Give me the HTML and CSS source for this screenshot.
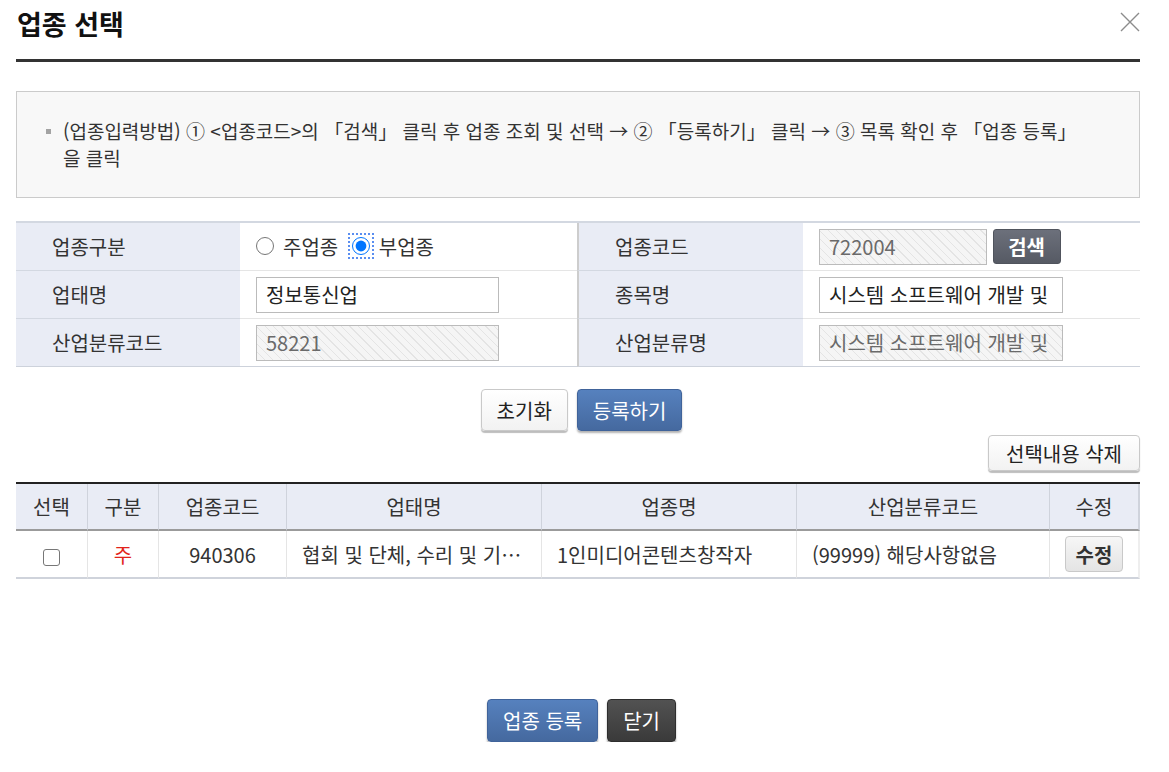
FILE: index.html
```html
<!DOCTYPE html>
<html lang="ko">
<head>
    <meta charset="UTF-8">
    <title>업종 선택</title>
    <link rel="stylesheet" href="styles.css">
</head>
<body>
    <div class="popup">
        <div class="popup-header">
            <h1 class="popup-title">업종 선택</h1>
            <button type="button" class="btn-close" title="닫기">
                <svg width="20" height="20" viewBox="0 0 20 20"><path d="M1 1L19 19M19 1L1 19" stroke="#8c8c8c" stroke-width="1.4" fill="none"/></svg>
            </button>
        </div>

        <!-- 입력 방법 안내 -->
        <div class="guide-box">
            <p class="guide-item">(업종입력방법) ① &lt;업종코드&gt;의 「검색」 클릭 후 업종 조회 및 선택 → ② 「등록하기」 클릭 → ③ 목록 확인 후 「업종 등록」을 클릭</p>
        </div>

        <table class="form-table">
            <colgroup>
                <col class="col-label">
                <col class="col-value">
                <col class="col-label2">
                <col class="col-value">
            </colgroup>
            <tbody>
                <tr>
                    <th>업종구분</th>
                    <td>
                        <label class="radio-item"><input type="radio" name="biz_type" value="main"> 주업종</label>
                        <label class="radio-item"><input type="radio" name="biz_type" value="sub" class="is-focus" checked> 부업종</label>
                    </td>
                    <th class="th-split">업종코드</th>
                    <td>
                        <input type="text" class="input-text input-readonly input-code" value="722004" readonly>
                        <button type="button" class="btn-search">검색</button>
                    </td>
                </tr>
                <tr>
                    <th>업태명</th>
                    <td><input type="text" class="input-text" value="정보통신업"></td>
                    <th class="th-split">종목명</th>
                    <td><input type="text" class="input-text input-wide" value="시스템 소프트웨어 개발 및 기타"></td>
                </tr>
                <tr class="last-row">
                    <th>산업분류코드</th>
                    <td><input type="text" class="input-text input-readonly" value="58221" readonly></td>
                    <th class="th-split">산업분류명</th>
                    <td><input type="text" class="input-text input-wide input-readonly" value="시스템 소프트웨어 개발 및 기타" readonly></td>
                </tr>
            </tbody>
        </table>

        <div class="btn-row">
            <button type="button" class="btn btn-white">초기화</button>
            <button type="button" class="btn btn-blue">등록하기</button>
        </div>
        <div class="btn-row-right">
            <button type="button" class="btn btn-white btn-small">선택내용 삭제</button>
        </div>

        <!-- 등록 목록 -->
        <table class="list-table">
            <colgroup>
                <col class="col-chk">
                <col class="col-type">
                <col class="col-code">
                <col class="col-name">
                <col class="col-name">
                <col class="col-ind">
                <col class="col-edit">
            </colgroup>
            <thead>
                <tr>
                    <th>선택</th>
                    <th>구분</th>
                    <th>업종코드</th>
                    <th>업태명</th>
                    <th>업종명</th>
                    <th>산업분류코드</th>
                    <th class="th-last">수정</th>
                </tr>
            </thead>
            <tbody>
                <tr>
                    <td><input type="checkbox" class="chk"></td>
                    <td class="text-red">주</td>
                    <td>940306</td>
                    <td class="text-left">협회 및 단체, 수리 및 기…</td>
                    <td class="text-left">1인미디어콘텐츠창작자</td>
                    <td class="text-left">(99999) 해당사항없음</td>
                    <td class="td-last"><button type="button" class="btn-edit">수정</button></td>
                </tr>
            </tbody>
        </table>

        <div class="popup-footer">
            <button type="button" class="btn btn-blue btn-large">업종 등록</button>
            <button type="button" class="btn btn-dark btn-large">닫기</button>
        </div>
    </div>
</body>
</html>
```

FILE: styles.css
```css
body {
    margin: 0;
    font-family: "Noto Sans CJK KR", "Noto Sans", sans-serif;
    font-size: 20px;
    color: #333;
    background-color: #fff;
}
.popup {
    width: 1124px;
    margin-left: 16px;
}
.popup-header {
    display: flex;
    justify-content: space-between;
    align-items: flex-start;
    height: 59px;
    border-bottom: 3px solid #333;
}
.popup-title {
    margin: 0;
    padding: 6px 0 0 1px;
    font-size: 27px;
    line-height: 36px;
    font-weight: bold;
    color: #111;
}
.btn-close {
    margin-top: 12px;
    padding: 0;
    width: 20px;
    height: 20px;
    border: none;
    background: none;
    cursor: pointer;
}
.btn-close svg {
    display: block;
}

/* 안내 박스 */
.guide-box {
    margin-top: 29px;
    padding: 25px 56px 26px 29px;
    background-color: #f8f8f8;
    border: 1px solid #cbcbcb;
}
.guide-item {
    display: flex;
    margin: 0;
    font-size: 19px;
    line-height: 27px;
    color: #333;
}
.guide-item::before {
    content: "";
    flex: none;
    width: 5px;
    height: 5px;
    margin: 12px 12px 0 0;
    background-color: #a3a3a3;
}

/* 입력 테이블 */
.form-table {
    width: 100%;
    margin-top: 23px;
    border-collapse: separate;
    border-spacing: 0;
    table-layout: fixed;
    border-top: 2px solid #d3d8e1;
}
.col-label { width: 224px; }
.col-value { width: 337px; }
.col-label2 { width: 226px; }
.form-table th {
    height: 47px;
    padding: 0 0 0 36px;
    text-align: left;
    font-weight: normal;
    color: #333;
    background-color: #e9ecf5;
    border-bottom: 1px solid #d3d8e1;
}
.form-table .th-split {
    padding-left: 36px;
    border-left: 2px solid #cdcdcd;
}
.form-table td {
    height: 47px;
    padding: 0 0 0 16px;
    border-bottom: 1px solid #e5e5e5;
    white-space: nowrap;
}
.form-table .last-row th,
.form-table .last-row td {
    border-bottom-color: #cdd2db;
}
.radio-item {
    display: inline-flex;
    align-items: center;
    margin-right: 8px;
    color: #333;
}
.radio-item input {
    width: 18px;
    height: 18px;
    margin: 0 9px 0 0;
}
.radio-item .is-focus {
    outline: 2px dotted #5a8ef0;
    outline-offset: 2px;
}
.input-text {
    box-sizing: border-box;
    width: 243px;
    height: 36px;
    padding: 0 9px;
    border: 1px solid #bbb;
    font-family: inherit;
    font-size: 20px;
    color: #222;
    background-color: #fff;
    vertical-align: middle;
    outline: none;
}
.input-wide {
    width: 244px;
}
.input-code {
    width: 168px;
}
.input-readonly {
    color: #6a6a6a;
    background: repeating-linear-gradient(45deg, #f5f5f5 0, #f5f5f5 5px, #e4e4e4 5px, #e4e4e4 6px);
}
.btn-search {
    height: 35px;
    width: 68px;
    padding: 0;
    border: 1px solid #50545d;
    border-radius: 3px;
    background: linear-gradient(#6c707b, #565a64);
    color: #fff;
    font-family: inherit;
    font-size: 20px;
    font-weight: bold;
    vertical-align: middle;
    cursor: pointer;
}

/* 버튼 */
.btn {
    height: 42px;
    padding: 0 15px;
    border-radius: 4px;
    font-family: inherit;
    font-size: 20px;
    cursor: pointer;
}
.btn-white {
    color: #222;
    background: linear-gradient(#ffffff, #f2f2f2);
    border: 1px solid #c9c9c9;
    box-shadow: 0 2px 1px #bdbdbd;
}
.btn-blue {
    color: #fff;
    background: linear-gradient(#5681be, #45699f);
    border: 1px solid #40639a;
    box-shadow: 0 2px 2px rgba(0, 0, 0, 0.3);
}
.btn-dark {
    color: #fff;
    background: linear-gradient(#525252, #3a3a3a);
    border: 1px solid #2e2e2e;
    box-shadow: 0 2px 2px rgba(0, 0, 0, 0.35);
}
.btn-small {
    height: 36px;
    padding: 0 17px;
}
.btn-large {
    height: 43px;
}
.btn-row {
    display: flex;
    justify-content: center;
    gap: 9px;
    margin-top: 22px;
    padding-left: 7px;
}
.btn-row-right {
    display: flex;
    justify-content: flex-end;
    margin-top: 4px;
}

/* 목록 테이블 */
.list-table {
    width: 100%;
    margin-top: 11px;
    border-collapse: separate;
    border-spacing: 0;
    table-layout: fixed;
    border-top: 2px solid #222;
}
.col-chk { width: 71px; }
.col-type { width: 71px; }
.col-code { width: 128px; }
.col-name { width: 255px; }
.col-ind { width: 253px; }
.col-edit { width: 91px; }
.list-table th {
    height: 45px;
    padding: 0;
    font-weight: normal;
    color: #333;
    background-color: #e9ecf5;
    border-bottom: 2px solid #9b9b9b;
    border-left: 1px solid #cfd3dc;
}
.list-table th:first-child,
.list-table td:first-child {
    border-left: none;
}
.list-table .th-last {
    border-right: 2px solid #cfd3dc;
}
.list-table td {
    height: 46px;
    padding: 0;
    text-align: center;
    color: #333;
    white-space: nowrap;
    overflow: hidden;
    border-bottom: 2px solid #cfd3db;
    border-left: 1px solid #e5e5e5;
}
.list-table .td-last {
    border-right: 2px solid #eeeeee;
}
.list-table .text-left {
    text-align: left;
    padding-left: 15px;
}
.list-table .text-red {
    color: #e2231a;
}
.chk {
    -webkit-appearance: none;
    appearance: none;
    box-sizing: border-box;
    width: 17px;
    height: 17px;
    margin: 0;
    border: 1.5px solid #777;
    border-radius: 3px;
    background-color: #fff;
    vertical-align: middle;
}
.btn-edit {
    width: 58px;
    height: 36px;
    padding: 0;
    border: 1px solid #c9c9c9;
    border-radius: 4px;
    background: linear-gradient(#f6f6f6, #e4e4e4);
    color: #333;
    font-family: inherit;
    font-size: 20px;
    font-weight: bold;
    vertical-align: middle;
    cursor: pointer;
}

.popup-footer {
    display: flex;
    justify-content: center;
    gap: 9px;
    margin-top: 120px;
    padding-left: 7px;
}
```
